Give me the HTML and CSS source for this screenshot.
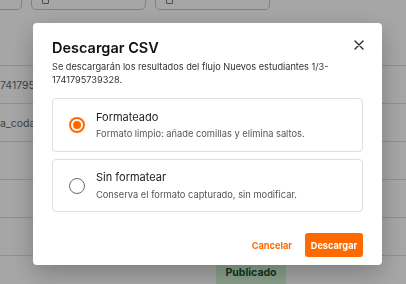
FILE: index.html
```html
<!DOCTYPE html>
<html lang="es">
<head>
<meta charset="utf-8">
<title>Descargar CSV</title>
<link rel="stylesheet" href="styles.css">
</head>
<body>
<div class="page">
  <div class="toolbar">
    <div class="tb-btn tb-back"></div>
    <div class="tb-btn tb-wide"><span class="tb-icon"></span></div>
    <div class="tb-btn tb-wide"><span class="tb-icon"></span></div>
  </div>
  <div class="table">
    <div class="row"><span class="cell">741795</span></div>
    <div class="row"><span class="cell">a_coda</span></div>
    <div class="row"></div>
    <div class="row"></div>
    <div class="row"></div>
    <div class="row row-badge"><span class="badge">Publicado</span></div>
  </div>
</div>

<div class="overlay">
  <div class="modal" role="dialog" aria-labelledby="dlg-title">
    <div class="modal-head">
      <h2 id="dlg-title" class="modal-title">Descargar CSV</h2>
      <button class="close" aria-label="Cerrar">
        <svg width="10" height="10" viewBox="0 0 10 10"><path d="M1 1L9 9M9 1L1 9" stroke="#2b2b2b" stroke-width="1.4" stroke-linecap="round"/></svg>
      </button>
    </div>
    <p class="modal-desc">Se descargarán los resultados del flujo Nuevos estudiantes 1/3-1741795739328.</p>
    <div class="options">
      <label class="option">
        <span class="radio radio-on"><span class="dot"></span></span>
        <span class="opt-text">
          <span class="opt-title">Formateado</span>
          <span class="opt-sub">Formato limpio: añade comillas y elimina saltos.</span>
        </span>
      </label>
      <label class="option">
        <span class="radio"></span>
        <span class="opt-text">
          <span class="opt-title">Sin formatear</span>
          <span class="opt-sub">Conserva el formato capturado, sin modificar.</span>
        </span>
      </label>
    </div>
    <div class="actions">
      <button class="btn-link">Cancelar</button>
      <button class="btn-primary">Descargar</button>
    </div>
  </div>
</div>
</body>
</html>
```

FILE: styles.css
```css
* { box-sizing: border-box; }
html, body { margin: 0; padding: 0; }
body {
  width: 406px;
  height: 284px;
  overflow: hidden;
  background: #ffffff;
  font-family: Inter, "Liberation Sans", sans-serif;
  color: #222;
}

.page { width: 406px; }

.toolbar {
  display: flex;
  gap: 9px;
  margin-top: -21px;
  margin-left: -20px;
  height: 31px;
}
.tb-btn {
  height: 31px;
  border: 1px solid #c9c9c9;
  border-radius: 5px;
  background: #fff;
  display: flex;
  align-items: center;
}
.tb-back { width: 42px; }
.tb-wide { width: 115px; padding-left: 10px; }
.tb-icon {
  width: 7px; height: 8px;
  border: 1.5px solid #777;
  border-radius: 1px;
  margin-top: 10px;
}

.table { margin-top: 55px; border-top: 1px solid #ddd; }
.row {
  height: 38px;
  border-bottom: 1px solid #ddd;
  display: flex;
  align-items: center;
}
.cell {
  font-size: 10.5px;
  color: #666;
  padding-top: 1px;
  white-space: nowrap;
}
.row-badge {
  border-bottom: none;
  padding-left: 216px;
  align-items: flex-start;
  padding-top: 9px;
}
.badge {
  display: inline-block;
  width: 70px;
  height: 27px;
  background: #d4f5d6;
  color: #14532d;
  font-weight: 700;
  font-size: 10.5px;
  text-align: center;
  line-height: 16px;
}

.overlay {
  position: fixed;
  inset: 0;
  background: rgba(0, 0, 0, 0.35);
  padding: 23px 0 0 33px;
}
.modal {
  width: 349px;
  height: 242px;
  background: #fff;
  border-radius: 4px;
  box-shadow: 0 8px 24px rgba(0, 0, 0, 0.25);
  padding: 16px 19px 8px 19px;
  display: flex;
  flex-direction: column;
}
.modal-head {
  display: flex;
  justify-content: space-between;
  align-items: flex-start;
}
.modal-title {
  margin: 0;
  font-size: 14.5px;
  line-height: 18px;
  font-weight: 600;
  color: #111;
}
.close {
  border: 0;
  background: none;
  padding: 0;
  margin: 1px -1px 0 0;
  width: 10px;
  height: 10px;
  display: block;
  cursor: pointer;
}
.close svg { display: block; }
.modal-desc {
  margin: 4px 0 0 0;
  font-size: 9.2px;
  line-height: 12.5px;
  color: #333;
}
.options {
  margin-top: 12px;
  display: flex;
  flex-direction: column;
  gap: 7px;
}
.option {
  height: 54px;
  border: 1px solid #dedede;
  border-radius: 4px;
  display: flex;
  align-items: center;
  padding-left: 16px;
  gap: 11px;
}
.option + .option { height: 53px; }
.radio {
  width: 16px;
  height: 16px;
  border-radius: 50%;
  border: 1.7px solid #6b6b6b;
  display: flex;
  align-items: center;
  justify-content: center;
  flex: none;
}
.radio-on { border: 2px solid #ff6a00; }
.dot { width: 8px; height: 8px; border-radius: 50%; background: #ff6a00; }
.opt-text { display: flex; flex-direction: column; gap: 4.6px; }
.opt-title { font-size: 11px; line-height: 14px; color: #222; }
.opt-sub { font-size: 9.3px; line-height: 12px; color: #555; }

.actions {
  margin-top: auto;
  display: flex;
  justify-content: flex-end;
  align-items: center;
  gap: 7px;
}
.btn-link {
  border: 0;
  background: none;
  font-family: inherit;
  font-size: 9.2px;
  font-weight: 700;
  color: #ff6a00;
  padding: 0 6px;
  height: 24px;
}
.btn-primary {
  border: 0;
  background: #ff6a00;
  color: #fff;
  font-family: inherit;
  font-size: 9.2px;
  font-weight: 700;
  border-radius: 3px;
  width: 58px;
  height: 24px;
  padding: 0;
}
```
